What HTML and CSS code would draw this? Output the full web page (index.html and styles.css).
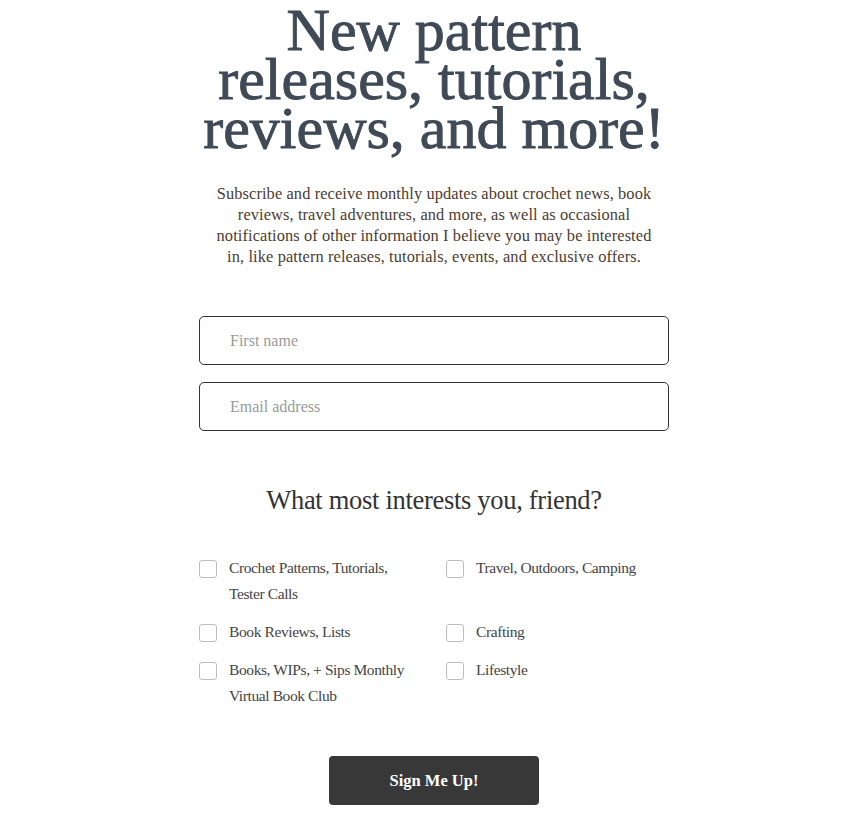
FILE: index.html
```html
<!DOCTYPE html>
<html>
<head>
<meta charset="utf-8">
<link rel="stylesheet" href="styles.css">
</head>
<body>
<main class="signup">
  <h1 class="title">New pattern releases, tutorials, reviews, and more!</h1>
  <p class="intro">Subscribe and receive monthly updates about crochet news, book reviews, travel adventures, and more, as well as occasional notifications of other information I believe you may be interested in, like pattern releases, tutorials, events, and exclusive offers.</p>
  <form class="form">
    <input class="field" type="text" placeholder="First name">
    <input class="field" type="email" placeholder="Email address">
    <h2 class="question">What most interests you, friend?</h2>
    <div class="options">
      <label class="option"><span class="box"></span><span class="label">Crochet Patterns, Tutorials, Tester Calls</span></label>
      <label class="option"><span class="box"></span><span class="label">Travel, Outdoors, Camping</span></label>
      <label class="option"><span class="box"></span><span class="label">Book Reviews, Lists</span></label>
      <label class="option"><span class="box"></span><span class="label">Crafting</span></label>
      <label class="option"><span class="box"></span><span class="label">Books, WIPs, + Sips Monthly Virtual Book Club</span></label>
      <label class="option"><span class="box"></span><span class="label">Lifestyle</span></label>
    </div>
    <div class="actions"><button class="submit" type="button">Sign Me Up!</button></div>
  </form>
</main>
</body>
</html>
```
FILE: styles.css
```css
* { box-sizing: border-box; }
html, body { margin: 0; padding: 0; background: #fff; }
body { font-family: "Liberation Serif", "DejaVu Serif", serif; }
.signup { width: 470px; margin: 0 auto; padding-top: 6px; }
.title {
  margin: 0 -20px;
  text-align: center;
  font-size: 60px;
  line-height: 49px;
  font-weight: normal;
  color: #3f4a56;
  -webkit-text-stroke: 0.9px #3f4a56;
}
.intro {
  margin: 30px auto 0;
  width: 456px;
  text-align: center;
  font-size: 16.4px;
  line-height: 21px;
  color: #4d3c30;
  letter-spacing: 0.1px;
}
.form { margin-top: 49px; display: flex; flex-direction: column; }
.field {
  display: block;
  width: 100%;
  height: 49px;
  border: 1px solid #333;
  border-radius: 5px;
  padding: 0 30px;
  font-family: inherit;
  font-size: 16px;
  color: #333;
  margin-bottom: 17px;
  outline: none;
}
.field::placeholder { color: #9a9a9a; }
.question {
  margin: 37px 0 0;
  text-align: center;
  font-size: 26.5px;
  font-weight: normal;
  color: #333;
  letter-spacing: -0.3px;
}
.options {
  margin-top: 43px;
  display: grid;
  grid-template-columns: 247px 1fr;
  row-gap: 16px;
}
.option { display: flex; align-items: flex-start; }
.box {
  flex: none;
  width: 18px;
  height: 18px;
  border: 1px solid #bdbdbd;
  border-radius: 3px;
  margin-top: 1px;
  margin-right: 12px;
}
.label {
  font-size: 15.5px;
  line-height: 26px;
  color: #444;
  letter-spacing: -0.4px;
  margin-top: -4px;
  max-width: 180px;
}
.actions { display: flex; justify-content: center; margin-top: 47px; }
.submit {
  width: 210px;
  height: 49px;
  background: #383838;
  color: #fff;
  border: none;
  border-radius: 4px;
  font-family: "Liberation Serif", serif;
  font-weight: bold;
  font-size: 16.5px;
}
```
